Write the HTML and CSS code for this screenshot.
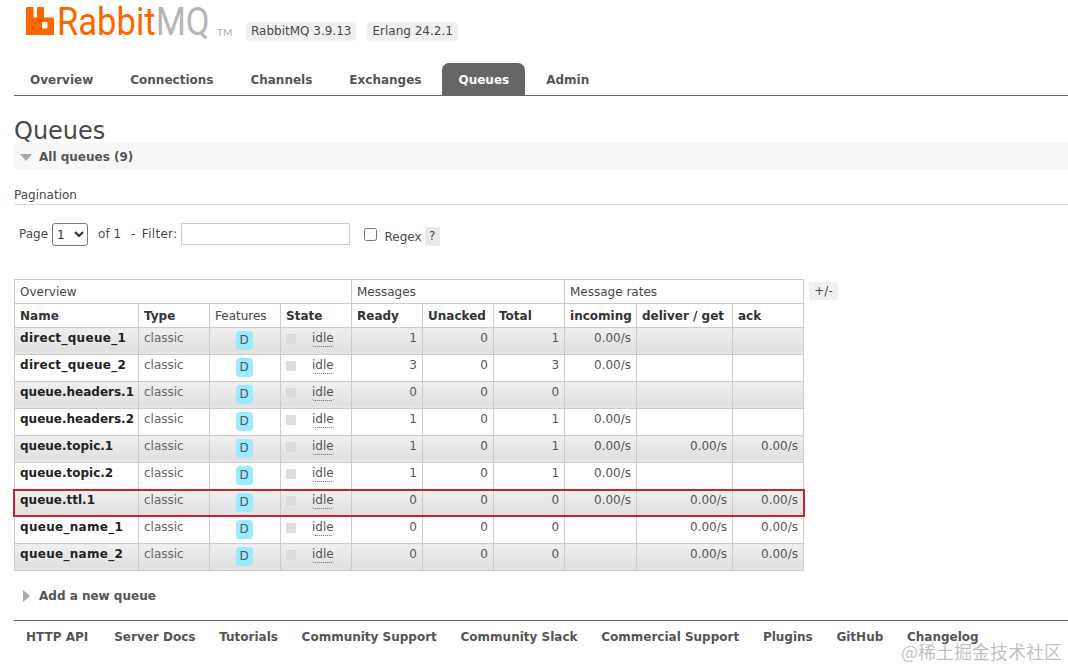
FILE: index.html
```html
<!DOCTYPE html>
<html lang="en">
<head>
<meta charset="utf-8">
<title>RabbitMQ Management</title>
<link rel="stylesheet" href="styles.css">
</head>
<body>
<header class="top">
  <div class="logo">
    <svg class="logo-mark" width="28" height="28" viewBox="0 0 28 28"><path fill="#f60" fill-rule="evenodd" d="M1 0h5.500a1 1 0 0 1 1 1v9.500h3.500V1a1 1 0 0 1 1-1H17a1 1 0 0 1 1 1v9.500h9a1 1 0 0 1 1 1V27a1 1 0 0 1-1 1H1a1 1 0 0 1-1-1V1a1 1 0 0 1 1-1zM16 16v4.500a1 1 0 0 0 1 1h3.500a1 1 0 0 0 1-1V16a1 1 0 0 0-1-1H17a1 1 0 0 0-1 1z"/></svg>
    <span class="logo-text"><span class="rabbit">Rabbit</span><span class="mq">MQ</span></span>
    <span class="tm">TM</span>
  </div>
  <span class="ver">RabbitMQ 3.9.13</span>
  <span class="ver">Erlang 24.2.1</span>
</header>
<nav class="tabs">
  <a>Overview</a><a>Connections</a><a>Channels</a><a>Exchanges</a><a class="active">Queues</a><a>Admin</a>
</nav>
<main>
  <h1>Queues</h1>
  <div class="section-head"><span class="tri-down"></span>All queues (9)</div>
  <h3>Pagination</h3>
  <div class="filter">
    <span>Page</span>
    <select class="page-select"><option>1</option></select>
    <span class="of">of 1</span>
    <span class="dash">- Filter:</span>
    <input class="filter-input" type="text">
    <input class="regex-box" type="checkbox">
    <span class="regex">Regex</span>
    <span class="help">?</span>
  </div>
  <div class="table-row">
    <div class="table-wrap">
      <table>
        <colgroup><col class="c1"><col class="c2"><col class="c3"><col class="c4"><col class="c5"><col class="c6"><col class="c7"><col class="c8"><col class="c9"><col class="c10"></colgroup>
        <thead>
          <tr class="groups"><th colspan="4">Overview</th><th colspan="3">Messages</th><th colspan="3">Message rates</th></tr>
          <tr class="cols"><th>Name</th><th>Type</th><th class="plain">Features</th><th>State</th><th>Ready</th><th>Unacked</th><th>Total</th><th>incoming</th><th>deliver / get</th><th>ack</th></tr>
        </thead>
        <tbody>
          <tr class="alt"><td class="name us">direct_queue_1</td><td class="type">classic</td><td class="feat"><span class="d">D</span></td><td class="state"><span class="dot"></span><span class="idle">idle</span></td><td class="n">1</td><td class="n">0</td><td class="n">1</td><td class="n">0.00/s</td><td class="n"></td><td class="n"></td></tr>
          <tr><td class="name us">direct_queue_2</td><td class="type">classic</td><td class="feat"><span class="d">D</span></td><td class="state"><span class="dot"></span><span class="idle">idle</span></td><td class="n">3</td><td class="n">0</td><td class="n">3</td><td class="n">0.00/s</td><td class="n"></td><td class="n"></td></tr>
          <tr class="alt"><td class="name">queue.headers.1</td><td class="type">classic</td><td class="feat"><span class="d">D</span></td><td class="state"><span class="dot"></span><span class="idle">idle</span></td><td class="n">0</td><td class="n">0</td><td class="n">0</td><td class="n"></td><td class="n"></td><td class="n"></td></tr>
          <tr><td class="name">queue.headers.2</td><td class="type">classic</td><td class="feat"><span class="d">D</span></td><td class="state"><span class="dot"></span><span class="idle">idle</span></td><td class="n">1</td><td class="n">0</td><td class="n">1</td><td class="n">0.00/s</td><td class="n"></td><td class="n"></td></tr>
          <tr class="alt"><td class="name">queue.topic.1</td><td class="type">classic</td><td class="feat"><span class="d">D</span></td><td class="state"><span class="dot"></span><span class="idle">idle</span></td><td class="n">1</td><td class="n">0</td><td class="n">1</td><td class="n">0.00/s</td><td class="n">0.00/s</td><td class="n">0.00/s</td></tr>
          <tr><td class="name">queue.topic.2</td><td class="type">classic</td><td class="feat"><span class="d">D</span></td><td class="state"><span class="dot"></span><span class="idle">idle</span></td><td class="n">1</td><td class="n">0</td><td class="n">1</td><td class="n">0.00/s</td><td class="n"></td><td class="n"></td></tr>
          <tr class="alt"><td class="name">queue.ttl.1</td><td class="type">classic</td><td class="feat"><span class="d">D</span></td><td class="state"><span class="dot"></span><span class="idle">idle</span></td><td class="n">0</td><td class="n">0</td><td class="n">0</td><td class="n">0.00/s</td><td class="n">0.00/s</td><td class="n">0.00/s</td></tr>
          <tr><td class="name us">queue_name_1</td><td class="type">classic</td><td class="feat"><span class="d">D</span></td><td class="state"><span class="dot"></span><span class="idle">idle</span></td><td class="n">0</td><td class="n">0</td><td class="n">0</td><td class="n"></td><td class="n">0.00/s</td><td class="n">0.00/s</td></tr>
          <tr class="alt"><td class="name us">queue_name_2</td><td class="type">classic</td><td class="feat"><span class="d">D</span></td><td class="state"><span class="dot"></span><span class="idle">idle</span></td><td class="n">0</td><td class="n">0</td><td class="n">0</td><td class="n"></td><td class="n">0.00/s</td><td class="n">0.00/s</td></tr>
        </tbody>
      </table>
      <div class="highlight"></div>
    </div>
    <span class="plus">+/-</span>
  </div>
  <div class="add"><span class="tri-right"></span>Add a new queue</div>
</main>
<footer class="foot">
  <a>HTTP API</a><a>Server Docs</a><a>Tutorials</a><a>Community Support</a><a>Community Slack</a><a>Commercial Support</a><a>Plugins</a><a>GitHub</a><a>Changelog</a>
</footer>
<div class="watermark">@稀土掘金技术社区</div>
</body>
</html>
```
FILE: styles.css
```css
* { box-sizing: border-box; }
html, body { margin: 0; padding: 0; }
body {
  width: 1068px; height: 668px; overflow: hidden; position: relative;
  background: #fff; color: #484848;
  font: 12px/15px "DejaVu Sans", Verdana, sans-serif;
}
.top { display: flex; align-items: flex-start; height: 63px; padding-left: 26px; }
.logo { display: flex; align-items: flex-start; width: 220px; padding-top: 7px; }
.logo-mark { flex: none; }
.logo-text { font: 400 38px/36px "Roboto", sans-serif; margin-left: 3px; margin-top: -3px; white-space: nowrap; width: 160px; transform: scaleX(.91); transform-origin: left center; }
.rabbit { color: #f60; }
.mq { color: #b5b5b5; }
.tm { font: 400 10px/8px "Lato", sans-serif; color: #aaa; margin-top: 21px; margin-left: 0; }
.ver { background: #f0f0f0; border-radius: 4px; font-size: 12px; line-height: 17px; height: 19px; padding: 1px 5px; margin-top: 22px; margin-right: 11px; color: #484848; }
.tabs { display: flex; height: 33px; margin: 0 0 0 14px; border-bottom: 1px solid #666; }
.tabs a { font-weight: 700; font-size: 12px; line-height: 32px; padding: 1px 16px 0; margin-right: 5px; color: #555; }
.tabs a.active { background: #666; color: #fff; border-radius: 7px 7px 0 0; }
main { padding-left: 14px; }
h1 { margin: 21px 0 0; height: 26px; font-weight: 400; font-size: 24px; line-height: 28px; color: #484848; }
.section-head { height: 26px; padding-top: 2px; background: #f8f8f8; font-weight: 700; font-size: 12px; line-height: 24px; color: #555; display: flex; align-items: center; }
.tri-down { width: 0; height: 0; border: 6px solid transparent; border-top: 7px solid #aaa; border-bottom: 0; margin: 0 7px 0 6px; }
h3 { margin: 19px 0 0; font-weight: 400; font-size: 12px; line-height: 15px; height: 17px; color: #484848; border-bottom: 1px solid #ddd; }
.filter { display: flex; align-items: flex-start; margin-top: 18px; padding-left: 5px; height: 56px; }
.filter > span { margin-top: 4px; }
.page-select { width: 36px; height: 23px; margin: 0 0 0 4px; font: 12px "DejaVu Sans", sans-serif; color: #333; border: 1px solid #767676; border-radius: 3px; background: #fff; }
.of { margin-left: 10px; }
.dash { margin-left: 10px; word-spacing: 2px; letter-spacing: .3px; }
.filter-input { width: 169px; height: 22px; margin: 0 0 0 4px; border: 1px solid #ccc; padding: 0; }
.regex-box { width: 13px; height: 13px; margin: 5px 0 0 14px; }
.filter > .regex { margin-left: 7px; margin-top: 7px; }
.filter > .help { margin-left: 3px; width: 15px; height: 19px; background: #e8e8e8; text-align: center; line-height: 19px; margin-top: 4px; }
.table-row { display: flex; align-items: flex-start; }
.table-wrap { position: relative; width: 790px; }
table { border-collapse: collapse; table-layout: fixed; width: 790px; }
.c1 { width: 124px; } .c2, .c3, .c4, .c5, .c6, .c7 { width: 71px; } .c8 { width: 72px; } .c9 { width: 96px; } .c10 { width: 71px; }
th, td { border: 1px solid #ccc; padding: 0 5px; text-align: left; white-space: nowrap; overflow: visible; }
.groups th { height: 24px; font-weight: 400; font-size: 12px; padding-top: 2px; }
.cols th { height: 24px; font-weight: 700; font-size: 12px; color: #333; padding-top: 2px; }
.cols th.plain { font-weight: 400; font-size: 12px; color: #484848; padding-top: 1px; }
tbody tr { height: 27px; }
tbody td { padding-top: 0; padding-bottom: 5px; height: 27px; }
tr.alt td { background: linear-gradient(#f0f0f0, #e0e0e0 85%, #e8e8e8); }
tbody td.name { font-weight: 700; font-size: 12px; color: #222; padding-bottom: 6px; }
.name.us { letter-spacing: .3px; }
.type { color: #666; }
.n { text-align: right; color: #555; }
tbody td.feat { text-align: center; padding: 0 7px 3px 5px; }
.d { display: inline-block; width: 17px; height: 19px; background: #99ebff; border-radius: 4px; color: #555; line-height: 19px; font-size: 12px; text-align: center; margin-top: 1px; }
.state { padding-left: 5px; }
.state .dot { display: inline-block; width: 10px; height: 10px; background: #ddd; vertical-align: middle; margin-right: 16px; }
tr.alt .dot { background: #dcdcdc; }
.idle { border-bottom: 1px dotted #666; border-radius: 3px; color: #555; padding-bottom: 1px; }
.highlight { position: absolute; left: -1px; top: 210px; width: 792px; height: 28px; border: 2px solid #cf2030; pointer-events: none; }
.plus { margin: 3px 0 0 5px; width: 29px; height: 18px; background: #f0f0f0; text-align: center; line-height: 18px; }
.add { display: flex; align-items: center; margin-top: 16px; height: 18px; font-weight: 700; font-size: 12px; color: #555; }
.tri-right { width: 0; height: 0; border: 6px solid transparent; border-left: 7px solid #aaa; border-right: 0; margin: 0 9px 0 9px; }
.foot { display: flex; margin: 15px 0 0 14px; border-top: 1px solid #666; padding: 9px 0 0 12px; }
.foot a { font-weight: 700; font-size: 12px; line-height: 15px; color: #555; margin-right: 23.700px; }
.foot a:first-child { margin-right: 26px; }
.watermark { position: absolute; right: 6px; top: 641px; font: 18px/20px "Noto Sans CJK SC", sans-serif; color: rgba(150,150,150,.6); }
```
